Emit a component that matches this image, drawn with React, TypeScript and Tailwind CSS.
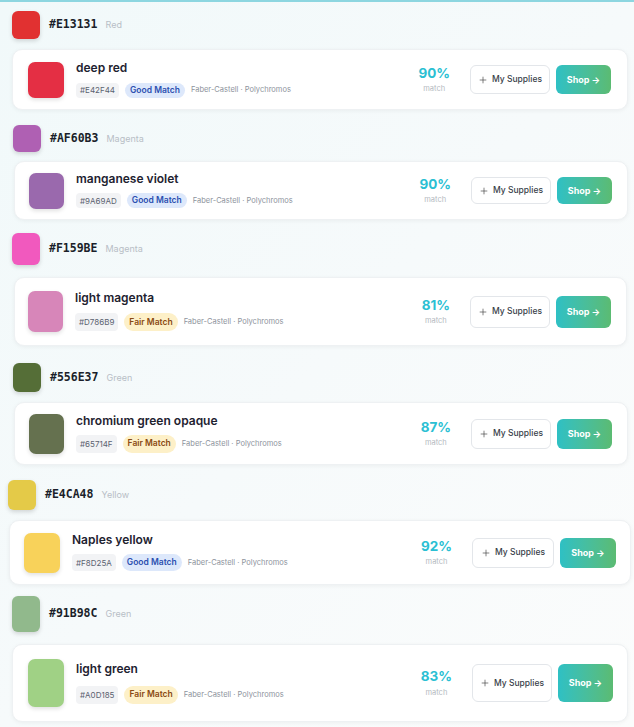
import React from "react";
import { Plus } from "lucide-react";

type Item = {
  hdr: string;
  family: string;
  name: string;
  hex: string;
  chipColor: string;
  good: boolean;
  pct: string;
  sec: string;
  hdrRow: string;
  hdrSw: string;
  card: string;
  sw: string;
  btnH: string;
  supW: string;
  shopW: string;
  chipH: string;
  gap: string;
};

const items: Item[] = [
  {
    hdr: "#E13131", family: "Red", name: "deep red", hex: "#E42F44", chipColor: "#E42F44", good: true, pct: "90%",
    sec: "mt-[9px]", hdrRow: "ml-[12px] h-[28px]", hdrSw: "w-[28px] h-[28px]",
    card: "mt-[10px] ml-[12px] mr-[6px] h-[61px] pl-[15px] pr-[16px]", sw: "w-[36px] h-[36px]",
    btnH: "h-[29px]", supW: "w-[80px]", shopW: "w-[55px]", chipH: "h-[15px]", gap: "gap-[9px]",
  },
  {
    hdr: "#AF60B3", family: "Magenta", name: "manganese violet", hex: "#9A69AD", chipColor: "#9A69AD", good: true, pct: "90%",
    sec: "mt-[15px]", hdrRow: "ml-[13px] h-[27px]", hdrSw: "w-[28px] h-[27px]",
    card: "mt-[9px] ml-[14px] mr-[6px] h-[59px] pl-[14px] pr-[15px]", sw: "w-[35px] h-[36px]",
    btnH: "h-[27px]", supW: "w-[80px]", shopW: "w-[55px]", chipH: "h-[15px]", gap: "gap-[8px]",
  },
  {
    hdr: "#F159BE", family: "Magenta", name: "light magenta", hex: "#D786B9", chipColor: "#D786B9", good: false, pct: "81%",
    sec: "mt-[13px]", hdrRow: "ml-[12px] h-[32px]", hdrSw: "w-[28px] h-[32px]",
    card: "mt-[12px] ml-[14px] mr-[7px] h-[69px] pl-[13px] pr-[15px]", sw: "w-[35px] h-[41px]",
    btnH: "h-[32px]", supW: "w-[80px]", shopW: "w-[55px]", chipH: "h-[18px]", gap: "gap-[9px]",
  },
  {
    hdr: "#556E37", family: "Green", name: "chromium green opaque", hex: "#65714F", chipColor: "#65714F", good: false, pct: "87%",
    sec: "mt-[17px]", hdrRow: "ml-[13px] h-[29px]", hdrSw: "w-[28px] h-[29px]",
    card: "mt-[10px] ml-[14px] mr-[6px] h-[63px] pl-[14px] pr-[15px]", sw: "w-[35px] h-[40px]",
    btnH: "h-[30px]", supW: "w-[80px]", shopW: "w-[55px]", chipH: "h-[18px]", gap: "gap-[8px]",
  },
  {
    hdr: "#E4CA48", family: "Yellow", name: "Naples yellow", hex: "#F8D25A", chipColor: "#F8D25A", good: true, pct: "92%",
    sec: "mt-[15px]", hdrRow: "ml-[8px] h-[30px]", hdrSw: "w-[28px] h-[30px]",
    card: "mt-[10px] ml-[9px] mr-[3px] h-[65px] pl-[14px] pr-[14px]", sw: "w-[36px] h-[40px]",
    btnH: "h-[30px]", supW: "w-[82px]", shopW: "w-[56px]", chipH: "h-[17px]", gap: "gap-[8px]",
  },
  {
    hdr: "#91B98C", family: "Green", name: "light green", hex: "#A0D185", chipColor: "#A0D185", good: false, pct: "83%",
    sec: "mt-[11px]", hdrRow: "ml-[12px] h-[36px]", hdrSw: "w-[28px] h-[36px]",
    card: "mt-[12px] ml-[12px] mr-[6px] h-[78px] pl-[15px] pr-[14px]", sw: "w-[36px] h-[48px]",
    btnH: "h-[38px]", supW: "w-[80px]", shopW: "w-[55px]", chipH: "h-[18px]", gap: "gap-[11px]",
  },
];

const sans = "font-['Inter','DejaVu_Sans',sans-serif]";

function Section({ it }: { it: Item }) {
  return (
    <div className={`flex flex-col ${it.sec}`}>
      <div className={`flex items-center gap-[8px] ${it.hdrRow}`}>
        <div
          className={`${it.hdrSw} rounded-[6px] shadow-[0_2px_4px_rgba(0,0,0,0.15)]`}
          style={{ backgroundColor: it.hdr }}
        />
        <span className="font-['DejaVu_Sans_Mono',monospace] text-[11.5px] font-bold text-[#1b1f2a] ml-[1px]">
          {it.hdr}
        </span>
        <span className={`${sans} text-[9px] text-[#b8bec6]`}>{it.family}</span>
      </div>
      <div
        className={`flex items-center bg-white rounded-[10px] border border-[#eef1f3] shadow-[0_1px_4px_rgba(0,0,0,0.05)] ${it.card}`}
      >
        <div
          className={`${it.sw} rounded-[7px] shrink-0 shadow-[0_2px_4px_rgba(0,0,0,0.12)]`}
          style={{ backgroundColor: it.chipColor }}
        />
        <div className={`flex flex-col ml-[12px] flex-1 ${it.gap}`}>
          <span className={`${sans} text-[12px] font-semibold text-[#1e2230] leading-none`}>{it.name}</span>
          <div className="flex items-center gap-[6px]">
            <span className={`${sans} ${it.chipH} flex items-center text-[8px] text-[#5b6270] bg-[#f2f3f5] rounded-[4px] px-[4px] leading-none`}>
              {it.hex}
            </span>
            {it.good ? (
              <span className={`${sans} ${it.chipH} flex items-center text-[8.5px] font-semibold text-[#2c4fb0] bg-[#dde8fb] rounded-full px-[5px] leading-none`}>
                Good Match
              </span>
            ) : (
              <span className={`${sans} ${it.chipH} flex items-center text-[8.5px] font-semibold text-[#8a4a12] bg-[#fdf0c8] rounded-full px-[5px] leading-none`}>
                Fair Match
              </span>
            )}
            <span className={`${sans} text-[7.5px] text-[#8d939c] leading-none`}>Faber-Castell · Polychromos</span>
          </div>
        </div>
        <div className="flex flex-col items-center mr-[20px] gap-[5px]">
          <span className={`${sans} text-[13.5px] font-bold text-[#2bbfd3] leading-none`}>{it.pct}</span>
          <span className={`${sans} text-[7.5px] text-[#b4b9c0] leading-none`}>match</span>
        </div>
        <div className="flex items-center gap-[6px]">
          <button
            className={`${it.btnH} ${it.supW} flex items-center justify-center gap-[4px] rounded-[6px] border border-[#e3e6ea] bg-white ${sans} text-[8.5px] font-medium text-[#3a3f4a]`}
          >
            <Plus size={10} strokeWidth={1.6} className="text-[#444]" />
            <span>My Supplies</span>
          </button>
          <button
            className={`${it.btnH} ${it.shopW} flex items-center justify-center rounded-[6px] bg-gradient-to-r from-[#2ec0c4] to-[#5bbb72] ${sans} text-[9px] font-bold text-white`}
          >
            Shop →
          </button>
        </div>
      </div>
    </div>
  );
}

export default function App() {
  return (
    <div className="w-[634px] h-[727px] overflow-hidden bg-gradient-to-br from-[#f1f9fa] via-[#f6fafb] to-[#fbfcfc] border-t-2 border-[#8dd6e0]">
      <div className="flex flex-col">
        {items.map((it) => (
          <Section key={it.hdr} it={it} />
        ))}
      </div>
    </div>
  );
}
